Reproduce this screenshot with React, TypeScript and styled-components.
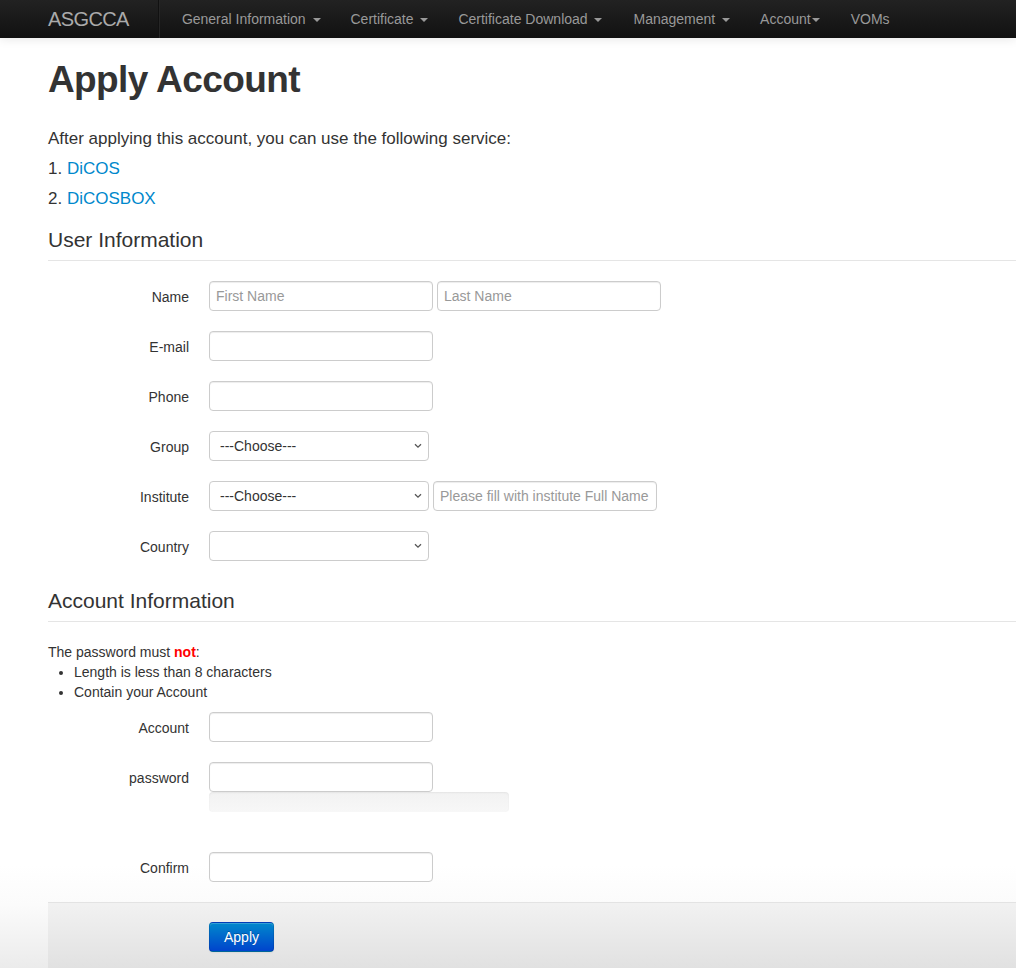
import React from "react";
import styled, { createGlobalStyle } from "styled-components";

const GlobalStyle = createGlobalStyle`
  html {
    min-height: 100%;
    background-color: #ebebeb;
    background-image: linear-gradient(to bottom, #ffffff 0px, #ffffff 865px, #fbfbfb 905px, #ebebeb 968px);
    background-repeat: no-repeat;
    background-size: 100% 968px;
  }
  body {
    margin: 0;
    font-family: "Liberation Sans", Arial, sans-serif;
    font-size: 14px;
    line-height: 20px;
    color: #333;
    overflow-x: hidden;
  }
  * { box-sizing: border-box; }
`;

const Navbar = styled.nav`
  height: 38px;
  display: flex;
  align-items: stretch;
  padding-left: 48px;
  background: linear-gradient(to bottom, #222222, #111111);
  box-shadow: 0 1px 10px rgba(0, 0, 0, 0.1);
  position: relative;
  z-index: 2;
`;

const Brand = styled.a`
  display: flex;
  align-items: center;
  padding-right: 20px;
  font-size: 20px;
  font-weight: 200;
  letter-spacing: -0.6px;
  color: #aaa;
  text-decoration: none;
`;

const Divider = styled.span`
  width: 2px;
  margin: 0 9px;
  border-left: 1px solid #111;
  border-right: 1px solid #262626;
`;

const NavList = styled.ul`
  display: flex;
  list-style: none;
  margin: 0 0 0 -2px;
  padding: 0;
`;

const NavLink = styled.a<{ $padL: number; $padR: number }>`
  display: flex;
  align-items: center;
  height: 38px;
  padding: 0 ${(p) => p.$padR}px 0 ${(p) => p.$padL}px;
  font-size: 14px;
  color: #999;
  text-decoration: none;
  white-space: pre;
`;

const Caret = styled.span<{ $tight?: boolean }>`
  display: inline-block;
  width: 0;
  height: 0;
  margin-left: ${(p) => (p.$tight ? "1px" : "3px")};
  margin-top: 1px;
  border-top: 4px solid #999;
  border-left: 4px solid transparent;
  border-right: 4px solid transparent;
`;

const Main = styled.main`
  padding: 22px 0 0 48px;
`;

const Title = styled.h1`
  margin: 0;
  font-size: 37px;
  line-height: 40px;
  font-weight: bold;
  letter-spacing: -0.6px;
  color: #333;
`;

const Intro = styled.div`
  margin-top: 24px;
  font-size: 17px;
  line-height: 30px;
`;

const IntroLine = styled.div``;

const Link = styled.a`
  color: #0088cc;
  text-decoration: none;
`;

const Legend = styled.div<{ $top: number }>`
  margin-top: ${(p) => p.$top}px;
  margin-bottom: 20px;
  font-size: 21px;
  line-height: 40px;
  color: #333;
  border-bottom: 1px solid #e5e5e5;
`;

const Row = styled.div`
  display: grid;
  grid-template-columns: 141px 1fr;
  column-gap: 20px;
  margin-bottom: 20px;
`;

const Label = styled.label`
  padding-top: 6px;
  text-align: right;
  font-size: 14px;
  line-height: 20px;
`;

const Controls = styled.div`
  display: flex;
  flex-direction: column;
  align-items: flex-start;
`;

const Inline = styled.div`
  display: flex;
  gap: 4px;
`;

const Input = styled.input`
  width: 224px;
  height: 30px;
  padding: 4px 6px;
  font-family: "Liberation Sans", Arial, sans-serif;
  font-size: 14px;
  color: #555;
  background: #fff;
  border: 1px solid #ccc;
  border-radius: 4px;
  box-shadow: inset 0 1px 1px rgba(0, 0, 0, 0.075);
  outline: none;
  &::placeholder {
    color: #999;
  }
`;

const SelectWrap = styled.div`
  position: relative;
  width: 220px;
  height: 30px;
`;

const Select = styled.select`
  appearance: none;
  width: 220px;
  height: 30px;
  padding: 0 24px 0 10px;
  font-family: "Liberation Sans", Arial, sans-serif;
  font-size: 14px;
  color: #333;
  background: #fff;
  border: 1px solid #ccc;
  border-radius: 4px;
  outline: none;
`;

const Chevron = styled.svg`
  position: absolute;
  right: 7px;
  top: 12px;
  pointer-events: none;
`;

const Progress = styled.div`
  width: 300px;
  height: 20px;
  margin-bottom: 20px;
  border-radius: 4px;
  background: linear-gradient(to bottom, #f2f2f2, #f7f7f7);
  box-shadow: inset 0 1px 2px rgba(0, 0, 0, 0.06);
`;

const Help = styled.div`
  margin-bottom: 10px;
  padding-top: 1px;
  margin-top: -1px;
  font-size: 14px;
  line-height: 20px;
`;

const Red = styled.strong`
  color: #ff0000;
`;

const Rules = styled.ul`
  margin: 0 0 0 26px;
  padding: 0;
`;

const Actions = styled.div`
  padding: 19px 20px 20px 161px;
  border-top: 1px solid #e3e3e3;
  background: rgba(0, 0, 0, 0.04);
`;

const Button = styled.button`
  height: 30px;
  padding: 4px 14px;
  font-family: "Liberation Sans", Arial, sans-serif;
  font-size: 14px;
  line-height: 20px;
  color: #fff;
  text-shadow: 0 -1px 0 rgba(0, 0, 0, 0.25);
  background: linear-gradient(to bottom, #0088cc, #0044cc);
  border: 1px solid rgba(0, 0, 0, 0.1);
  border-bottom-color: rgba(0, 0, 0, 0.25);
  border-radius: 4px;
  box-shadow: inset 0 1px 0 rgba(255, 255, 255, 0.2), 0 1px 2px rgba(0, 0, 0, 0.05);
`;

const ChevronIcon = () => (
  <Chevron width="8" height="6" viewBox="0 0 8 6">
    <path d="M1 1.2 L4 4.2 L7 1.2" fill="none" stroke="#555" strokeWidth="1.3" />
  </Chevron>
);

const Dropdown = ({ options }: { options: string[] }) => (
  <SelectWrap>
    <Select defaultValue={options[0]}>
      {options.map((o) => (
        <option key={o}>{o}</option>
      ))}
    </Select>
    <ChevronIcon />
  </SelectWrap>
);

const navItems: { label: string; caret: boolean; tight?: boolean; padL: number; padR: number }[] = [
  { label: "General Information ", caret: true, padL: 15, padR: 15 },
  { label: "Certificate ", caret: true, padL: 15, padR: 15 },
  { label: "Certificate Download ", caret: true, padL: 15, padR: 15 },
  { label: "Management ", caret: true, padL: 16, padR: 15 },
  { label: "Account", caret: true, tight: true, padL: 15, padR: 15 },
  { label: "VOMs", caret: false, padL: 16, padR: 15 },
];

export default function App() {
  return (
    <>
      <GlobalStyle />
      <Navbar>
        <Brand href="#">ASGCCA</Brand>
        <Divider />
        <NavList>
          {navItems.map((n) => (
            <li key={n.label}>
              <NavLink href="#" $padL={n.padL} $padR={n.padR}>
                {n.label}
                {n.caret && <Caret $tight={n.tight} />}
              </NavLink>
            </li>
          ))}
        </NavList>
      </Navbar>
      <Main>
        <Title>Apply Account</Title>
        <Intro>
          <IntroLine>After applying this account, you can use the following service:</IntroLine>
          <IntroLine>
            1. <Link href="#">DiCOS</Link>
          </IntroLine>
          <IntroLine>
            2. <Link href="#">DiCOSBOX</Link>
          </IntroLine>
        </Intro>

        <Legend $top={6}>User Information</Legend>
        <Row>
          <Label>Name</Label>
          <Controls>
            <Inline>
              <Input placeholder="First Name" />
              <Input placeholder="Last Name" />
            </Inline>
          </Controls>
        </Row>
        <Row>
          <Label>E-mail</Label>
          <Controls>
            <Input />
          </Controls>
        </Row>
        <Row>
          <Label>Phone</Label>
          <Controls>
            <Input />
          </Controls>
        </Row>
        <Row>
          <Label>Group</Label>
          <Controls>
            <Dropdown options={["---Choose---"]} />
          </Controls>
        </Row>
        <Row>
          <Label>Institute</Label>
          <Controls>
            <Inline>
              <Dropdown options={["---Choose---"]} />
              <Input placeholder="Please fill with institute Full Name" />
            </Inline>
          </Controls>
        </Row>
        <Row>
          <Label>Country</Label>
          <Controls>
            <Dropdown options={[""]} />
          </Controls>
        </Row>

        <Legend $top={0}>Account Information</Legend>
        <Help>
          The password must <Red>not</Red>:
          <Rules>
            <li>Length is less than 8 characters</li>
            <li>Contain your Account</li>
          </Rules>
        </Help>
        <Row>
          <Label>Account</Label>
          <Controls>
            <Input />
          </Controls>
        </Row>
        <Row>
          <Label>password</Label>
          <Controls>
            <Input type="password" />
            <Progress />
          </Controls>
        </Row>
        <Row>
          <Label>Confirm</Label>
          <Controls>
            <Input type="password" />
          </Controls>
        </Row>
        <Actions>
          <Button type="button">Apply</Button>
        </Actions>
      </Main>
    </>
  );
}
